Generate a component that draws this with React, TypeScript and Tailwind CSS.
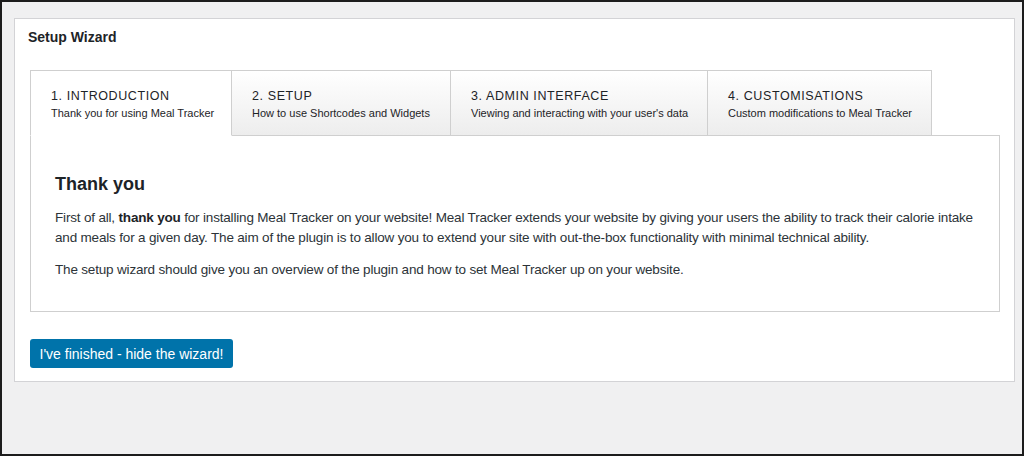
const tabs = [
  { title: "1. Introduction", sub: "Thank you for using Meal Tracker", w: "w-[202px]", active: true },
  { title: "2. Setup", sub: "How to use Shortcodes and Widgets", w: "w-[220px]", active: false },
  { title: "3. Admin Interface", sub: "Viewing and interacting with your user's data", w: "w-[258px]", active: false },
  { title: "4. Customisations", sub: "Custom modifications to Meal Tracker", w: "w-[225px]", active: false },
];

export default function App() {
  return (
    <div className="w-[1024px] h-[456px] box-border border-2 border-[#1c1c1c] bg-[#f0f0f1] pt-[16px] pl-[12px] pr-[7px] font-['Liberation_Sans',Arial,sans-serif]">
      {/* Card */}
      <div className="bg-white border border-[#d3d3d6] pt-2 pb-[13px] pl-[15px] pr-[15px]">
        <h2 className="-ml-[2px] text-[14px] leading-5 font-bold text-[#1d2327]">Setup Wizard</h2>

        {/* Tabs */}
        <div className="mt-[23px] flex">
          {tabs.map((tab, i) => (
            <div
              key={tab.title}
              className={`${tab.w} h-[66px] box-border border border-[#cfcfcf] pl-5 pt-[17px] ${
                i > 0 ? "-ml-px" : ""
              } ${
                tab.active
                  ? "bg-white border-b-white relative z-10"
                  : "bg-gradient-to-b from-white to-[#ededed]"
              }`}
            >
              <div className="text-[12.5px] leading-4 uppercase tracking-[0.6px] text-[#1d2327]">{tab.title}</div>
              <div className="mt-[2px] text-[11px] leading-[14px] text-[#1d2327] whitespace-nowrap">{tab.sub}</div>
            </div>
          ))}
        </div>

        {/* Panel */}
        <div className="-mt-px w-[970px] h-[177px] box-border border border-[#cfcfcf] pl-[24px] pr-[18px] pt-[36px]">
          <h3 className="text-[18px] leading-6 font-bold text-[#1d2327]">Thank you</h3>
          <p className="mt-[12px] text-[13.5px] leading-5 tracking-[-0.18px] text-[#2c3338]">
            First of all, <b className="text-[#1d2327]">thank you</b> for installing Meal Tracker on your website! Meal Tracker extends your website by giving your users the ability to track their calorie intake and meals for a given day. The aim of the plugin is to allow you to extend your site with out-the-box functionality with minimal technical ability.
          </p>
          <p className="mt-[12px] text-[13.5px] leading-5 tracking-[-0.18px] text-[#2c3338]">
            The setup wizard should give you an overview of the plugin and how to set Meal Tracker up on your website.
          </p>
        </div>

        <button className="mt-[27px] w-[203px] h-[29px] rounded-[3px] bg-[#0073aa] text-white text-[14px] leading-none">
          I've finished - hide the wizard!
        </button>
      </div>
    </div>
  );
}
